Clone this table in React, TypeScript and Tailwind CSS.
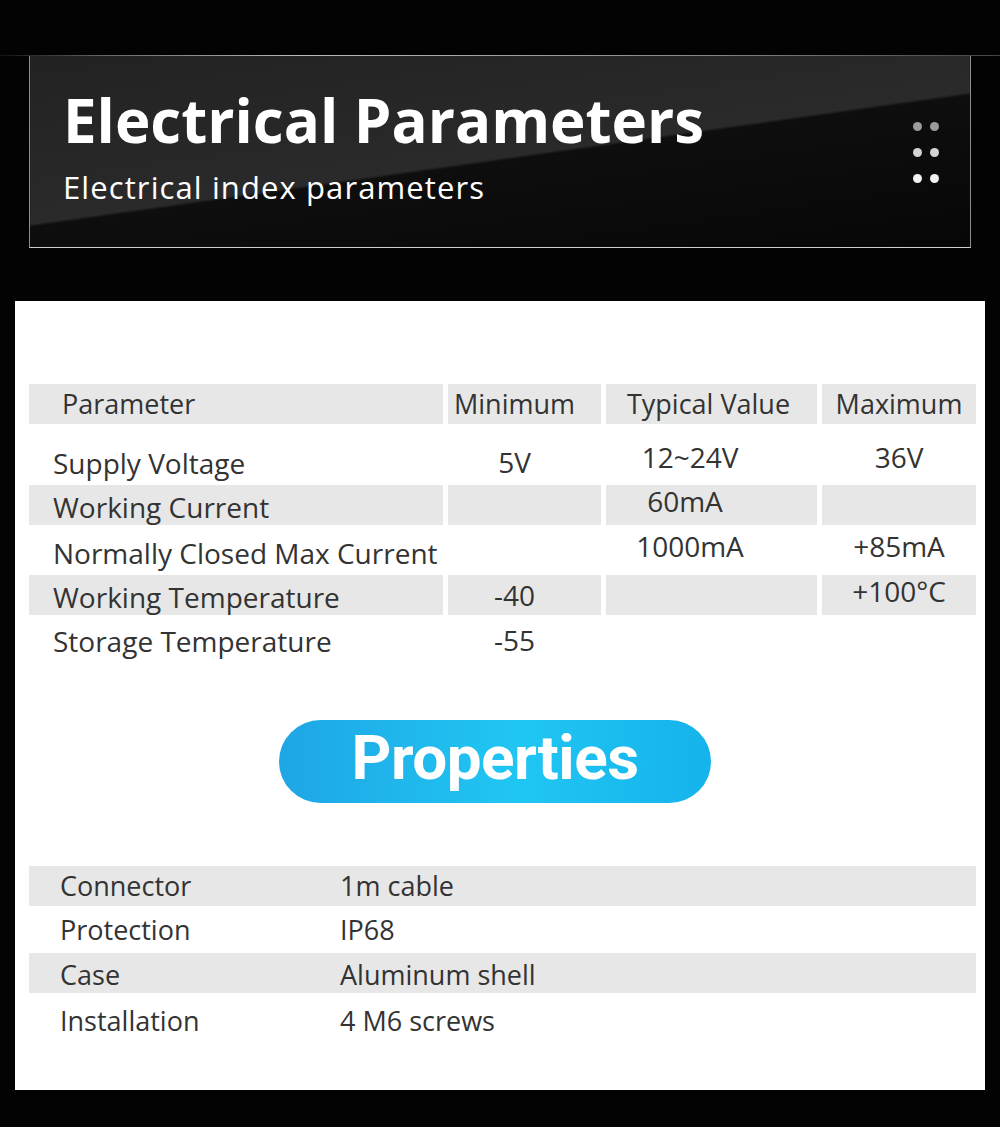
import React from "react";

const body = { fontFamily: '"Open Sans", "Noto Sans", sans-serif' };

type Cell = { text: string; cls: string };
type Row = { h: string; bg: boolean; cells: Cell[] };

const header: Cell[] = [
  { text: "Parameter", cls: "pl-[33px] items-center" },
  { text: "Minimum", cls: "justify-center pr-[20px] items-center" },
  { text: "Typical Value", cls: "justify-center pr-[6px] items-center" },
  { text: "Maximum", cls: "justify-center items-center" },
];

const rows: Row[] = [
  {
    h: "h-[61px]",
    bg: false,
    cells: [
      { text: "Supply Voltage", cls: "pl-[24px] pt-[23px]" },
      { text: "5V", cls: "justify-center pr-[20px] pt-[22px]" },
      { text: "12~24V", cls: "justify-center pr-[43px] pt-[17px]" },
      { text: "36V", cls: "justify-center pt-[17px]" },
    ],
  },
  {
    h: "h-[40px]",
    bg: true,
    cells: [
      { text: "Working Current", cls: "pl-[24px] pt-[6px]" },
      { text: "", cls: "" },
      { text: "60mA", cls: "justify-center pr-[53px] pt-0" },
      { text: "", cls: "" },
    ],
  },
  {
    h: "h-[50px]",
    bg: false,
    cells: [
      { text: "Normally Closed Max Current", cls: "pl-[24px] pt-[12px]" },
      { text: "", cls: "" },
      { text: "1000mA", cls: "justify-center pr-[43px] pt-[5px]" },
      { text: "+85mA", cls: "justify-center pt-[5px]" },
    ],
  },
  {
    h: "h-[40px]",
    bg: true,
    cells: [
      { text: "Working Temperature", cls: "pl-[24px] pt-[6px]" },
      { text: "-40", cls: "justify-center pr-[20px] pt-[4px]" },
      { text: "", cls: "" },
      { text: "+100°C", cls: "justify-center pt-0" },
    ],
  },
  {
    h: "h-[50px]",
    bg: false,
    cells: [
      { text: "Storage Temperature", cls: "pl-[24px] pt-[10px]" },
      { text: "-55", cls: "justify-center pr-[20px] pt-[9px]" },
      { text: "", cls: "" },
      { text: "", cls: "" },
    ],
  },
];

const props = [
  { label: "Connector", value: "1m cable", bg: true, h: "h-[40px]", pt: "pt-[4px]" },
  { label: "Protection", value: "IP68", bg: false, h: "h-[47px]", pt: "pt-[8px]" },
  { label: "Case", value: "Aluminum shell", bg: true, h: "h-[40px]", pt: "pt-[6px]" },
  { label: "Installation", value: "4 M6 screws", bg: false, h: "h-[48px]", pt: "pt-[12px]" },
];

const Dots = () => (
  <div className="self-start mt-[66px] grid grid-cols-[9px_9px] gap-x-[8px] gap-y-[17px]">
    <span className="w-[9px] h-[9px] rounded-full bg-[#9b9b9b]" />
    <span className="w-[9px] h-[9px] rounded-full bg-[#9b9b9b]" />
    <span className="w-[9px] h-[9px] rounded-full bg-[#d4d4d4]" />
    <span className="w-[9px] h-[9px] rounded-full bg-[#d4d4d4]" />
    <span className="w-[9px] h-[9px] rounded-full bg-[#f2f2f2]" />
    <span className="w-[9px] h-[9px] rounded-full bg-[#f2f2f2]" />
  </div>
);

export default function App() {
  return (
    <div className="w-[1000px] h-[1127px] bg-[#030303] flex flex-col overflow-hidden" style={body}>
      <div className="pt-[55px] flex flex-col">
        <div className="h-px bg-[linear-gradient(90deg,#111_0%,#666_10%,#bbb_30%,#888_70%,#444_100%)]" />
        <div className="mx-[29px] h-[192px] border-x border-b border-x-[#8c8c8c] border-b-[#cfcfcf] bg-[linear-gradient(172deg,#222_0%,#2a2a2a_52%,#0e0e0e_53%,#070707_100%)] flex justify-between pl-[33px] pr-[31px]">
          <div className="flex flex-col">
            <h1 className="mt-[34px] text-[60px] leading-[60px] font-bold text-white">
              Electrical Parameters
            </h1>
            <p className="mt-[22px] text-[31px] leading-[31px] text-white tracking-[1.1px]">
              Electrical index parameters
            </p>
          </div>
          <Dots />
        </div>
      </div>

      <div className="mt-[53px] mx-[15px] h-[789px] bg-white flex flex-col pl-[14px] pr-[9px] text-[#333]">
        <div className="mt-[83px] flex flex-col">
          <div className="grid grid-cols-[414px_153px_211px_154px] gap-x-[5px] h-[40px] text-[27px]">
            {header.map((c) => (
              <div key={c.text} className={`bg-[#e7e7e7] flex leading-[32px] ${c.cls}`}>
                {c.text}
              </div>
            ))}
          </div>
          {rows.map((r, i) => (
            <div key={i} className={`grid grid-cols-[414px_153px_211px_154px] gap-x-[5px] text-[28px] ${r.h}`}>
              {r.cells.map((c, j) => (
                <div
                  key={j}
                  className={`flex items-start leading-[32px] whitespace-nowrap ${r.bg ? "bg-[#e7e7e7]" : ""} ${c.cls}`}
                >
                  {c.text}
                </div>
              ))}
            </div>
          ))}
        </div>

        <div className="mt-[55px] ml-[250px] w-[432px] h-[83px] rounded-full bg-[linear-gradient(90deg,#1ea6e5_0%,#20c6f3_55%,#15b3eb_100%)] flex items-center justify-center pb-[7px]">
          <span
            className="text-white font-bold text-[62px] leading-[64px] tracking-[-0.5px]"
            style={{ fontFamily: "Roboto, sans-serif" }}
          >
            Properties
          </span>
        </div>

        <div className="mt-[63px] flex flex-col text-[27px]">
          {props.map((p) => (
            <div
              key={p.label}
              className={`grid grid-cols-[311px_1fr] leading-[32px] ${p.h} ${p.pt} ${p.bg ? "bg-[#e7e7e7]" : ""}`}
            >
              <span className="pl-[31px]">{p.label}</span>
              <span>{p.value}</span>
            </div>
          ))}
        </div>
      </div>
    </div>
  );
}
